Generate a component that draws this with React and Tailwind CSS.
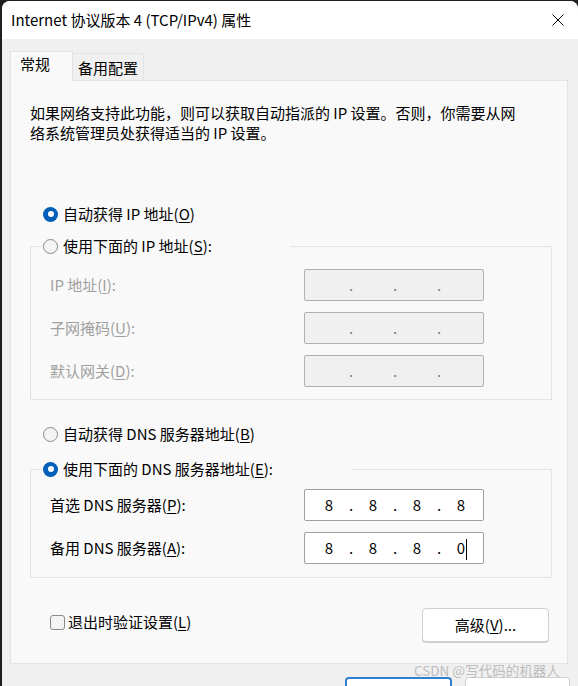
import React from "react";

// Windows "Internet 协议版本 4 (TCP/IPv4) 属性" dialog

function Radio({ checked }) {
  if (checked) {
    return (
      <span className="flex h-[15px] w-[15px] shrink-0 items-center justify-center rounded-full bg-[#005fb8]">
        <span className="h-[6px] w-[6px] rounded-full bg-white" />
      </span>
    );
  }
  return <span className="h-[15px] w-[15px] shrink-0 rounded-full border border-[#8a8a8a] bg-[#f4f4f4]" />;
}

function RadioRow({ checked, inset = true, children }) {
  return (
    <div className={"flex h-[20px] items-center gap-[5px] leading-[20px] " + (inset ? "pl-[13px]" : "")}>
      <Radio checked={checked} />
      <span className="whitespace-nowrap">{children}</span>
    </div>
  );
}

function IpBox({ values, disabled, cursor }) {
  const cells = values || ["", "", "", ""];
  return (
    <div
      className={
        "flex h-[32px] w-[180px] items-center rounded-[2px] border pl-[9px] text-[15px] leading-[20px] " +
        (disabled ? "border-[#b0b0b0] bg-[#f0f0f0] text-[#7a7a7a]" : "border-[#a0a0a0] bg-white text-black")
      }
    >
      {cells.map((v, i) => (
        <React.Fragment key={i}>
          <span className="relative flex w-[30px] justify-center">
            {v}
            {cursor && i === 3 && (
              <span className="absolute left-[20px] top-[1px] h-[21px] w-[1px] bg-black" />
            )}
          </span>
          {i < 3 && <span className="flex w-[14px] justify-center">.</span>}
        </React.Fragment>
      ))}
    </div>
  );
}

function FieldRow({ label, disabled, children }) {
  return (
    <div className="flex h-[32px] items-center">
      <span className={"w-[254px] whitespace-nowrap leading-[20px] " + (disabled ? "text-[#a0a0a0]" : "text-black")}>
        {label}
      </span>
      {children}
    </div>
  );
}

export default function App() {
  return (
    <div className="relative h-[686px] w-[578px] overflow-hidden bg-[#1f1f1f] pl-[2px] pt-[1px] font-['Noto_Sans_CJK_SC',sans-serif] text-[15px] text-black">
      <div className="flex h-full flex-col overflow-hidden rounded-t-[8px] bg-[#f0f0f0]">
        {/* title bar */}
        <div className="flex h-[38px] shrink-0 items-center justify-between bg-white pl-[9px] pr-[14px]">
          <span className="whitespace-nowrap leading-[20px]">Internet 协议版本 4 (TCP/IPv4) 属性</span>
          <svg width="12" height="12" viewBox="0 0 12 12">
            <path d="M0.5 0.5 L11.5 11.5 M11.5 0.5 L0.5 11.5" stroke="#000" strokeWidth="1" />
          </svg>
        </div>

        <div className="pt-[12px]">
          {/* tabs */}
          <div className="ml-[8px] flex items-end">
            <div className="relative z-10 -mb-px h-[30px] w-[63px] border border-b-0 border-[#e3e3e3] bg-[#f9f9f9] pl-[9px] pt-[2px] leading-[20px]">
              常规
            </div>
            <div className="h-[27px] w-[71px] border border-b-0 border-l-0 border-[#e3e3e3] bg-[#f0f0f0] pl-[5px] pt-[4px] leading-[20px]">
              备用配置
            </div>
          </div>

          {/* panel */}
          <div className="ml-[8px] mr-[10px] border border-[#e3e3e3] bg-[#f9f9f9] pb-[21px] pl-[19px] pt-[22px]">
            <p className="whitespace-nowrap leading-[20px]">
              如果网络支持此功能，则可以获取自动指派的 IP 设置。否则，你需要从网
              <br />
              络系统管理员处获得适当的 IP 设置。
            </p>

            <div className="mt-[61px]">
              <RadioRow checked>
                自动获得 IP 地址(<u className="underline-offset-[2px]">O</u>)
              </RadioRow>
            </div>

            <fieldset className="mt-[12px] w-[522px] border border-[#e3e3e3] pb-[12px] pl-[19px]">
              <legend className="-ml-[7px] w-[247px]">
                <RadioRow inset={false}>
                  使用下面的 IP 地址(<u className="underline-offset-[2px]">S</u>):
                </RadioRow>
              </legend>
              <div className="flex flex-col gap-[11px] pt-[13px]">
                <FieldRow disabled label={<>IP 地址(<u className="underline-offset-[2px]">I</u>):</>}>
                  <IpBox disabled />
                </FieldRow>
                <FieldRow disabled label={<>子网掩码(<u className="underline-offset-[2px]">U</u>):</>}>
                  <IpBox disabled />
                </FieldRow>
                <FieldRow disabled label={<>默认网关(<u className="underline-offset-[2px]">D</u>):</>}>
                  <IpBox disabled />
                </FieldRow>
              </div>
            </fieldset>

            <div className="mt-[24px]">
              <RadioRow>
                自动获得 DNS 服务器地址(<u className="underline-offset-[2px]">B</u>)
              </RadioRow>
            </div>

            <fieldset className="mt-[15px] w-[522px] border border-[#e3e3e3] pb-[13px] pl-[19px]">
              <legend className="-ml-[7px] w-[309px]">
                <RadioRow checked inset={false}>
                  使用下面的 DNS 服务器地址(<u className="underline-offset-[2px]">E</u>):
                </RadioRow>
              </legend>
              <div className="flex flex-col gap-[11px] pt-[10px]">
                <FieldRow label={<>首选 DNS 服务器(<u className="underline-offset-[2px]">P</u>):</>}>
                  <IpBox values={["8", "8", "8", "8"]} />
                </FieldRow>
                <FieldRow label={<>备用 DNS 服务器(<u className="underline-offset-[2px]">A</u>):</>}>
                  <IpBox values={["8", "8", "8", "0"]} cursor />
                </FieldRow>
              </div>
            </fieldset>

            <div className="mt-[30px] flex w-[519px] items-start justify-between">
              <div className="ml-[20px] mt-[4px] flex h-[20px] items-center gap-[3px] leading-[20px]">
                <span className="h-[15px] w-[15px] rounded-[3px] border border-[#8a8a8a] bg-[#f4f4f4]" />
                <span className="whitespace-nowrap">
                  退出时验证设置(<u className="underline-offset-[2px]">L</u>)
                </span>
              </div>
              <button className="h-[34px] w-[127px] rounded-[4px] border border-[#d0d0d0] bg-white leading-[20px] shadow-[0_1px_0_#cfcfcf]">
                高级(<u className="underline-offset-[2px]">V</u>)...
              </button>
            </div>
          </div>

          {/* dialog buttons, cut off by the window edge */}
          <div className="mt-[13px] flex justify-end gap-[13px] pr-[8px]">
            <div className="h-[34px] w-[107px] rounded-[4px] border-2 border-[#2f7fd0] bg-white" />
            <div className="h-[34px] w-[105px] rounded-[4px] border border-[#d0d0d0] bg-white" />
          </div>
        </div>
      </div>

      <span className="absolute left-[414px] top-[660px] whitespace-nowrap text-[13.5px] leading-[20px] text-[#bdbdbd]">
        CSDN @写代码的机器人
      </span>
    </div>
  );
}
